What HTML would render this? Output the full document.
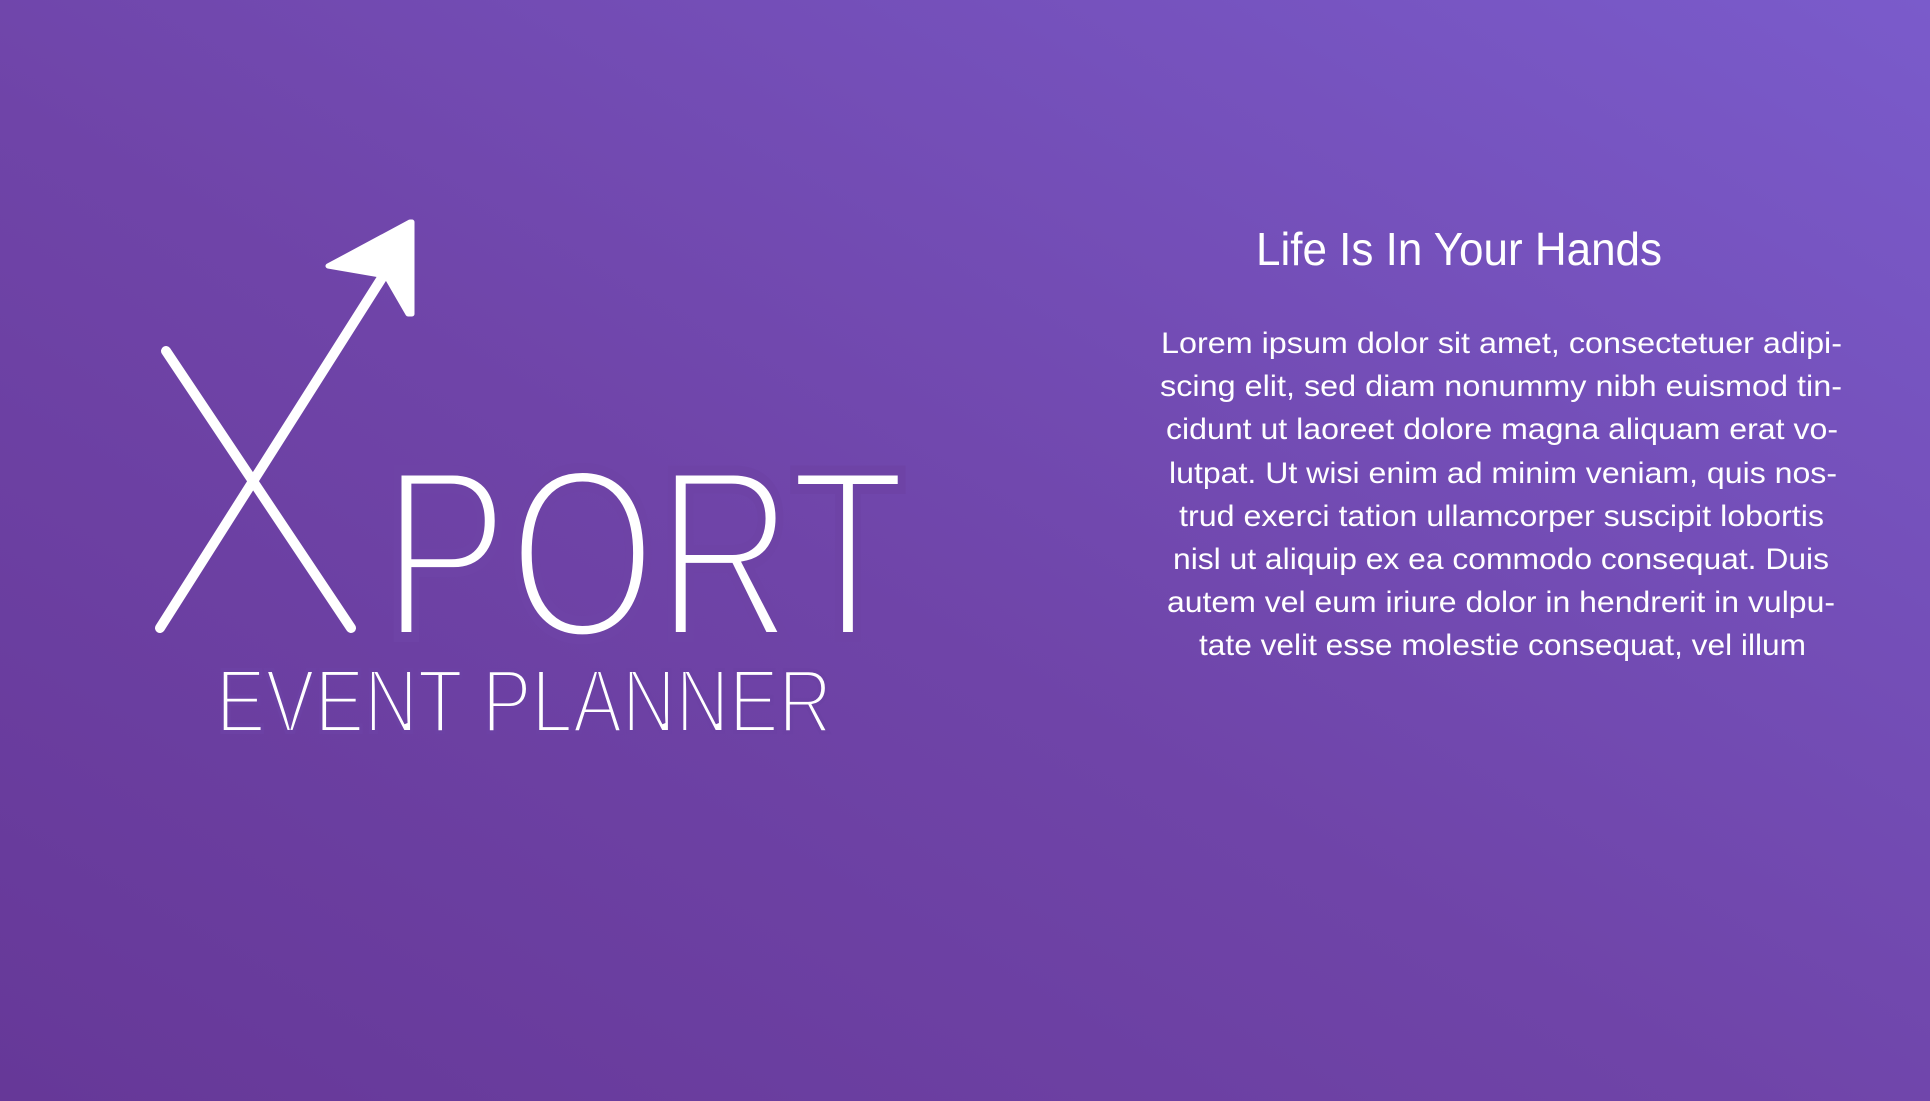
<!DOCTYPE html>
<html><head><meta charset="utf-8"><style>
html,body{margin:0;padding:0;width:1930px;height:1101px;overflow:hidden}
body{background:linear-gradient(to top right,#663898 0%,#6f44a8 45%,#7a5bcb 100%)}
svg{position:absolute;left:0;top:0}
text{font-family:"Liberation Sans",sans-serif;fill:#fff}
</style></head><body>
<svg width="1930" height="1101" viewBox="0 0 1930 1101">
<g stroke="#fff" stroke-linecap="round" fill="none">
<line x1="160" y1="628" x2="392" y2="262" stroke-width="10"/>
<line x1="166" y1="351" x2="351" y2="628" stroke-width="10"/>
</g>
<polygon points="410,222 328,266 386,276 408,314 412,314 412,222" fill="#fff" stroke="#fff" stroke-width="5" stroke-linejoin="round"/>
<text x="382" y="637" font-size="242" textLength="524" lengthAdjust="spacingAndGlyphs" stroke="#6e43a6" stroke-width="10" paint-order="fill stroke">PORT</text>
<text x="216" y="732" font-size="90" textLength="616" lengthAdjust="spacingAndGlyphs" stroke="#6c41a4" stroke-width="4" paint-order="fill stroke">EVENT PLANNER</text>
<text x="1256" y="265" font-size="46" textLength="406" lengthAdjust="spacingAndGlyphs">Life Is In Your Hands</text>
<g font-size="30">
<text x="1161" y="353" textLength="681" lengthAdjust="spacingAndGlyphs">Lorem ipsum dolor sit amet, consectetuer adipi-</text>
<text x="1160" y="396" textLength="682" lengthAdjust="spacingAndGlyphs">scing elit, sed diam nonummy nibh euismod tin-</text>
<text x="1166" y="439" textLength="672" lengthAdjust="spacingAndGlyphs">cidunt ut laoreet dolore magna aliquam erat vo-</text>
<text x="1169" y="483" textLength="668" lengthAdjust="spacingAndGlyphs">lutpat. Ut wisi enim ad minim veniam, quis nos-</text>
<text x="1179" y="526" textLength="645" lengthAdjust="spacingAndGlyphs">trud exerci tation ullamcorper suscipit lobortis</text>
<text x="1173" y="569" textLength="656" lengthAdjust="spacingAndGlyphs">nisl ut aliquip ex ea commodo consequat. Duis</text>
<text x="1167" y="612" textLength="668" lengthAdjust="spacingAndGlyphs">autem vel eum iriure dolor in hendrerit in vulpu-</text>
<text x="1199" y="655" textLength="607" lengthAdjust="spacingAndGlyphs">tate velit esse molestie consequat, vel illum</text>
</g>
</svg>
</body></html>
